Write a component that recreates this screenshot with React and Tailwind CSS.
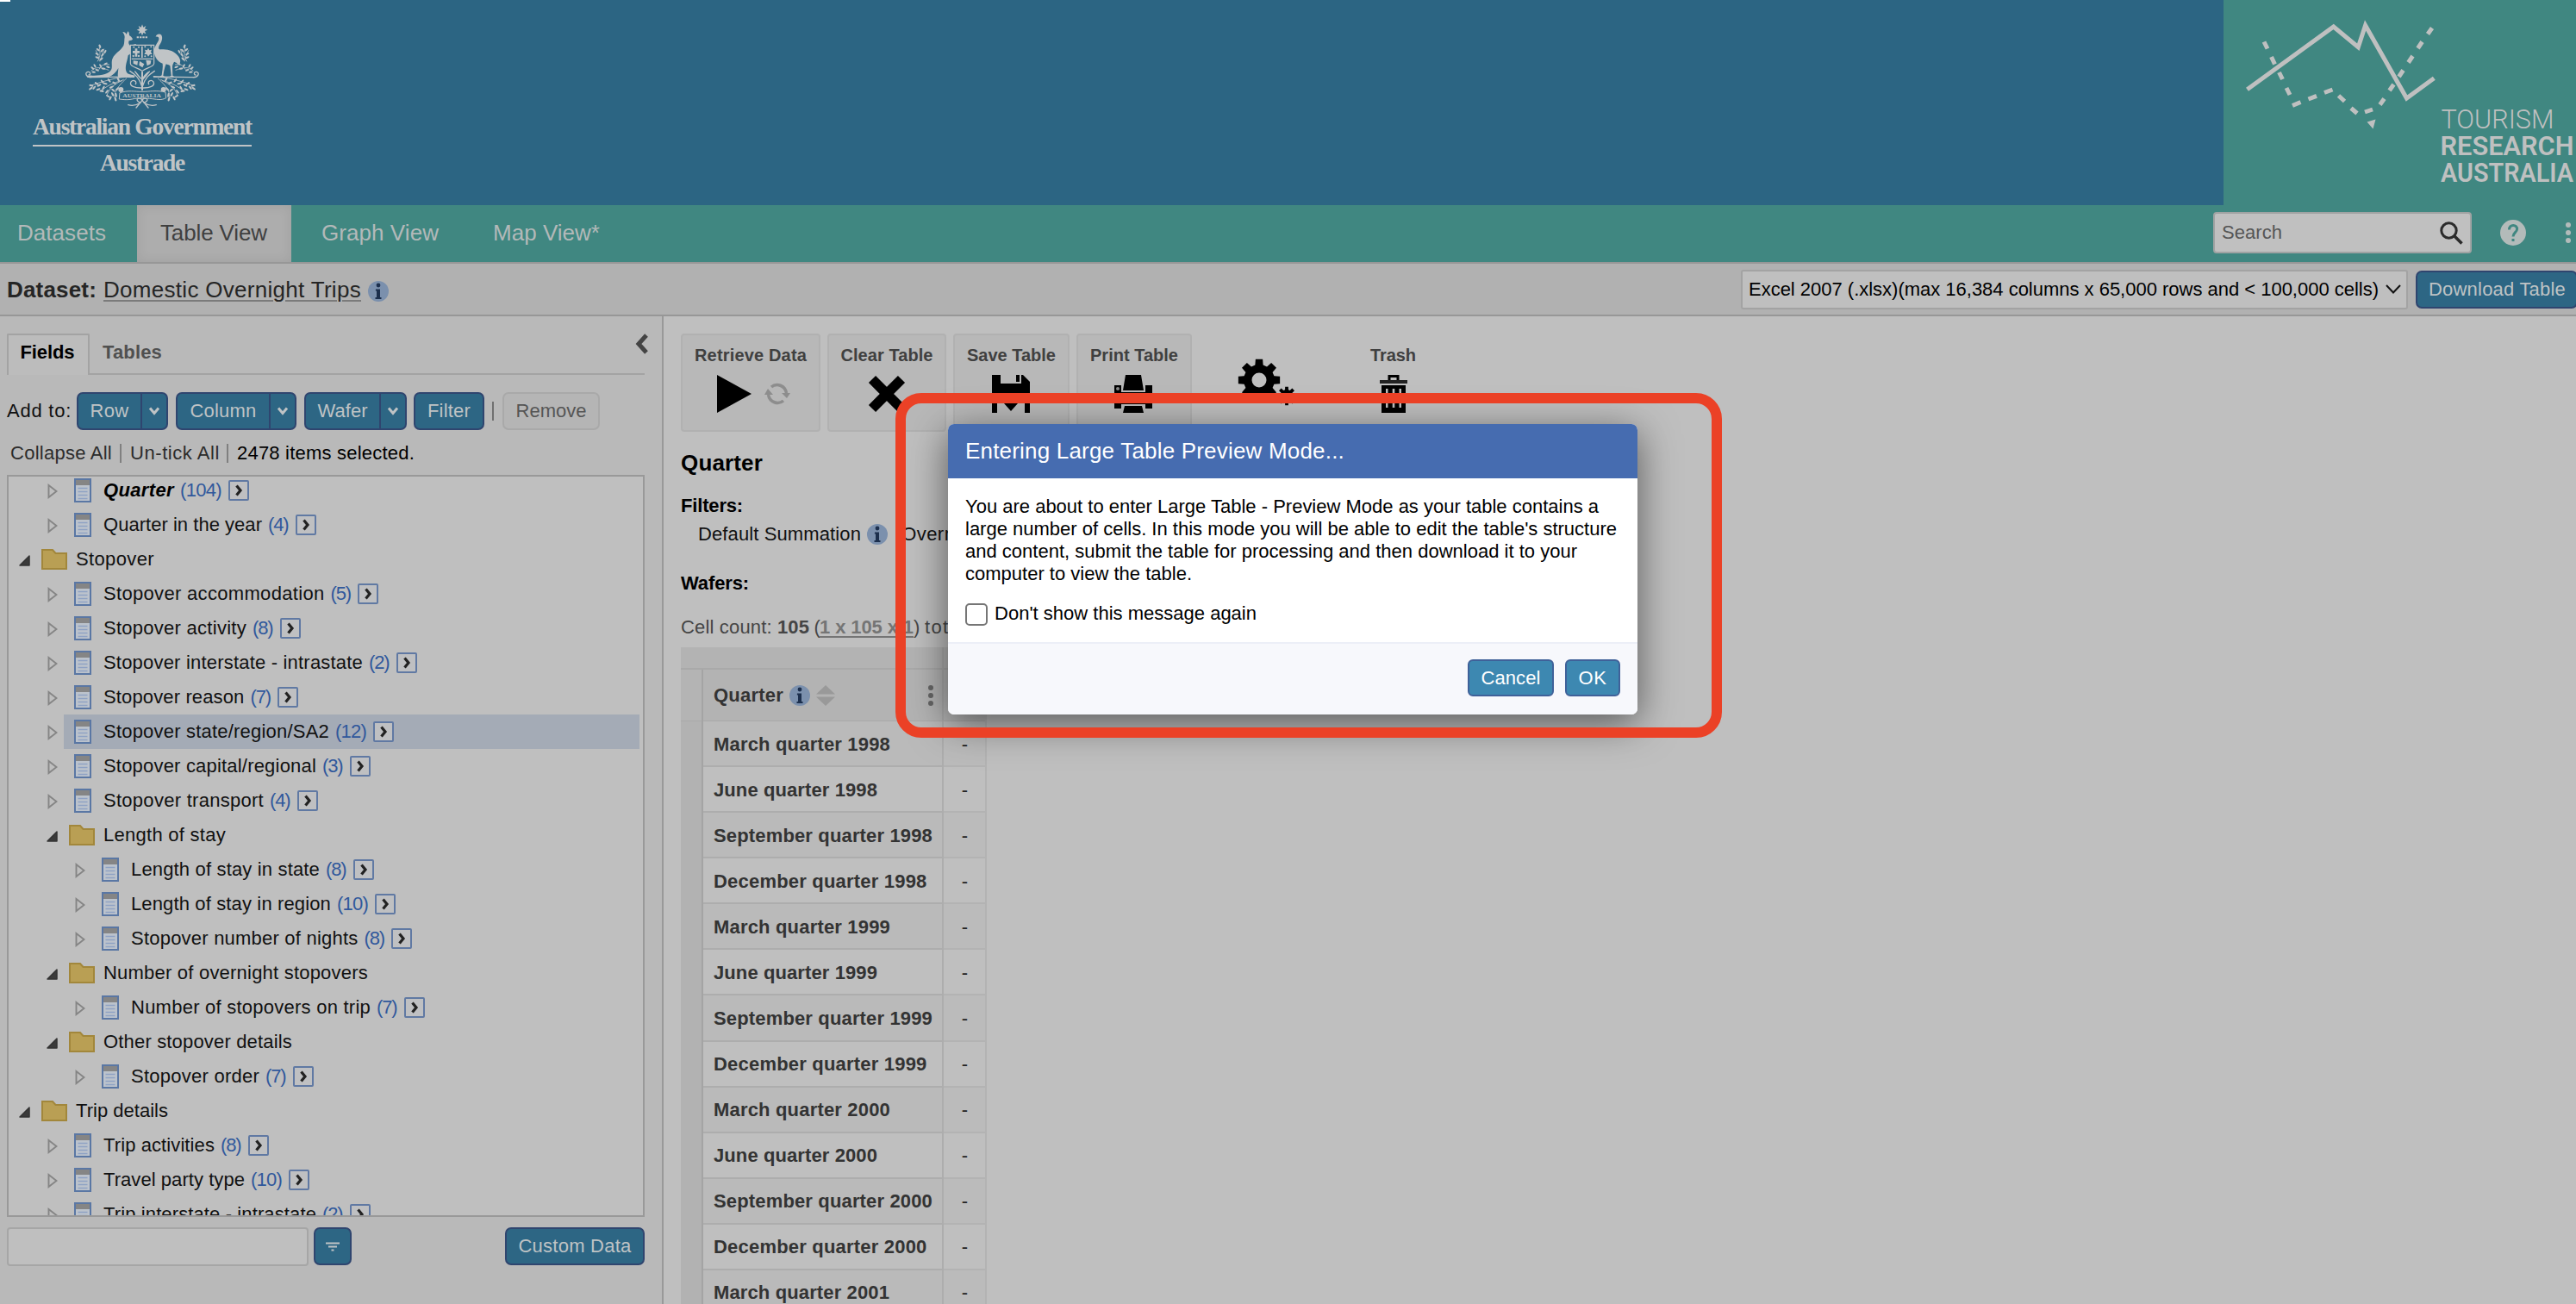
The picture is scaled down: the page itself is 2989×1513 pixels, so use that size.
import { useLayoutEffect, useRef } from "react";

/* Text set to an exact advance width by adjusting its letter spacing. */
function Fit({ w, className = "", children }) {
  const ref = useRef(null);
  useLayoutEffect(() => {
    const el = ref.current;
    el.style.letterSpacing = "0px";
    const natural = el.getBoundingClientRect().width;
    el.style.letterSpacing = `${(w - natural) / el.textContent.length}px`;
  }, [w, children]);
  return (
    <span ref={ref} className={`inline-block whitespace-pre ${className}`}>
      {children}
    </span>
  );
}

function gearPath(cx, cy, outer, inner, hole) {
  const pts = [];
  for (let i = 0; i < 8; i++) {
    const a = (i * Math.PI) / 4 - Math.PI / 2;
    [[-0.26, inner], [-0.17, outer], [0.17, outer], [0.26, inner]].forEach(([d, r]) => {
      pts.push(`${(cx + Math.cos(a + d) * r).toFixed(2)} ${(cy + Math.sin(a + d) * r).toFixed(2)}`);
    });
  }
  return `M${pts.join("L")}ZM${cx - hole} ${cy}a${hole} ${hole} 0 1 0 ${hole * 2} 0a${hole} ${hole} 0 1 0 ${-hole * 2} 0Z`;
}

const Sprig = () => (
  <g>
    <path d="M455 268C420 262 350 285 312 298M440 272C420 290 390 320 402 348M425 280C395 285 370 300 350 316M430 276C400 292 385 300 372 330" fill="none" strokeWidth="2.6" />
    <g stroke="none">
      {[
        [318, 297, 20], [316, 307, -35], [328, 304, -50], [336, 290, 40], [345, 296, -30], [342, 310, -20], [356, 283, 50],
        [360, 305, -60], [354, 316, 10], [372, 318, -50], [376, 334, 30], [384, 341, -60], [392, 327, 60], [402, 344, 70],
        [404, 330, 80], [366, 290, 10], [380, 279, 50], [388, 302, -20], [398, 288, 30], [412, 276, 60], [408, 309, -40], [394, 313, 40],
      ].map(([x, y, r]) => (
        <ellipse key={`${x}-${y}`} cx={x} cy={y} rx="8" ry="3.3" transform={`rotate(${r} ${x} ${y})`} />
      ))}
      <circle cx="421" cy="311" r="9" />
    </g>
    <path d="M345 156C348 180 352 192 340 212M362 170C356 190 352 200 348 212M334 175C342 190 344 200 346 210M318 245C335 228 355 235 378 243M345 240C352 225 365 220 380 224" fill="none" strokeWidth="2.4" />
    <g stroke="none">
      {[
        [348, 160, 70], [341, 172, 40], [355, 175, -50], [338, 187, 30], [357, 190, -50], [338, 199, 20], [353, 204, -40], [366, 179, -60],
        [322, 236, 40], [330, 228, 60], [338, 243, 20], [350, 228, 60], [360, 238, 10], [368, 221, -30], [376, 232, 20], [326, 250, 10],
      ].map(([x, y, r]) => (
        <ellipse key={`${x}-${y}`} cx={x} cy={y} rx="7" ry="3.2" transform={`rotate(${r} ${x} ${y})`} />
      ))}
    </g>
    <path d="M455 265C420 268 345 266 320 268C300 270 293 252 306 249C316 248 316 260 309 260" fill="none" strokeWidth="4" />
    <path d="M494 300C486 270 470 258 452 246M494 305C470 306 448 298 456 284C464 274 478 282 472 292M490 272C480 262 476 254 470 248" fill="none" strokeWidth="4" />
    <path d="M494 345C480 335 470 348 484 354C492 357 494 350 494 345M490 356C475 366 460 368 446 364M492 352L474 374" fill="none" strokeWidth="4" />
  </g>
);

function CoatOfArms() {
  return (
    <svg viewBox="291 80 408 300" className="h-[100px] w-[136px]" fill="#c0c4c6" stroke="#c0c4c6" strokeLinecap="round">
      <path d="M495 84l4 10 9-5-4 10 10 4-10 4 4 10-9-4-4 10-4-10-9 4 4-10-10-4 10-4-4-10 9 5z" stroke="none" />
      <path d="M476 129H516" strokeWidth="6" strokeDasharray="7 3" strokeLinecap="butt" />
      <Sprig />
      <g transform="translate(990 0) scale(-1 1)"><Sprig /></g>
      {/* kangaroo */}
      <path stroke="none" d="M427 110C434 110 438 114 440 119L445 108C450 112 450 118 450 122C456 126 460 130 462 135C460 140 454 140 449 141C446 148 448 153 453 158L472 152L476 157L456 164C452 172 452 180 454 186L446 192C444 206 440 216 438 228C436 244 440 256 452 258L470 262L468 269H412C408 262 412 246 412 236C404 250 392 264 376 267L306 269C298 266 306 261 320 262C350 263 380 258 388 240C392 230 386 214 392 202C400 184 420 176 430 158C434 148 432 138 434 128C434 120 430 116 427 110Z" />
      {/* emu */}
      <path stroke="none" d="M542 127C544 118 556 114 562 121C568 132 562 146 554 158C550 168 552 172 560 171C582 168 608 176 622 196C628 206 630 214 624 222L606 214C602 222 600 226 600 232L601 262L610 268H588L596 262L592 228C588 224 582 224 578 222C572 236 570 250 568 262L576 268H552L563 261C564 248 568 234 566 220C548 214 538 196 536 178C536 160 550 148 553 136C554 128 550 126 542 127Z" />
      {/* shield */}
      <path d="M454 156H536V220C536 232 510 234 495 246C480 234 454 232 454 220Z" fill="#2c6583" strokeWidth="3.5" />
      <g stroke="none">
        <path d="M470 168h8v8h8v8h-8v12h-8v-12h-8v-8h8zM516 166l4 8 8-2-3 8 5 8-8 0-6 8-5-8-9 0 5-8-3-8 8 2z" />
        <path d="M492 160h5v40h-5zM458 202h74v4h-74zM464 210l16 2-2 14-14-6zM486 212l16 10-6 12-12-8zM508 208l18 2-2 12-12 6z" />
        <circle cx="466" cy="163" r="3" /><circle cx="483" cy="163" r="3" /><circle cx="505" cy="162" r="3" /><circle cx="526" cy="162" r="3" />
        <circle cx="483" cy="194" r="3.4" /><circle cx="464" cy="194" r="3.4" /><circle cx="505" cy="195" r="3" /><circle cx="527" cy="195" r="3" />
      </g>
      <path d="M495 250V312M495 282C495 270 505 262 515 252" fill="none" strokeWidth="6" />
      {/* ribbon */}
      <path d="M418 322C445 312 470 318 495 318C520 318 545 312 576 320L578 340C560 350 545 344 520 342C505 340 485 340 470 342C445 348 430 346 416 344Z" fill="#2c6583" strokeWidth="3" />
      <text x="427" y="338" fontSize="21" fontWeight="bold" fontFamily="Liberation Serif, serif" textLength="134" lengthAdjust="spacingAndGlyphs" stroke="none">AUSTRALIA</text>
    </svg>
  );
}

function ResearchLogo() {
  return (
    <svg viewBox="2580 0 409 238" className="h-[238px] w-[409px] shrink-0 bg-[#408781]" fill="#bfc0c0">
      <path d="M2607.5 103.7L2707.7 31L2736.3 54.7L2744.6 29.5L2792.5 114L2824.3 90.7" fill="none" stroke="#bfc0c0" strokeWidth="5" />
      <g fill="none" stroke="#bfc0c0" strokeWidth="5">
        <path d="M2627 48.5L2631 56.5M2635.5 66L2639.5 74.5M2644.5 84L2648.5 92M2653 102L2657 110M2660 122.5L2669.5 118.5M2678.5 115L2688 111.3M2697 107.5L2706.5 104M2713.5 111L2720.5 117.5M2728 125.5L2735 131.5M2744 130L2753 127M2761.5 121.5L2766.5 114.5M2772.5 105L2777.5 98M2783.5 89L2788.5 81.5M2794.5 72.5L2799.5 65M2805.5 56L2810.5 48.5M2817 39.5L2822 32.5" />
      </g>
      <path d="M2746.5 141.5L2756.5 138.5L2753.5 149.5Z" />
      <text x="2832.5" y="148.5" fontSize="31.5" fontWeight="300" fontFamily="Roboto, sans-serif" textLength="131" lengthAdjust="spacingAndGlyphs">TOURISM</text>
      <text x="2831.5" y="179.5" fontSize="31" fontWeight="600" fontFamily="Roboto, sans-serif" textLength="155" lengthAdjust="spacingAndGlyphs">RESEARCH</text>
      <text x="2832" y="210.5" fontSize="31" fontWeight="600" fontFamily="Roboto, sans-serif" textLength="154" lengthAdjust="spacingAndGlyphs">AUSTRALIA</text>
    </svg>
  );
}

const Info = ({ className = "" }) => (
  <svg viewBox="0 0 24 24" className={`size-6 shrink-0 ${className}`}>
    <circle cx="12" cy="12" r="12" fill="#7b90ad" />
    <path d="M9 9.5H14V19H15.5V21H8.5V19H10V11.5H8.8Z" fill="#1c2f4d" />
    <circle cx="12" cy="5" r="2.4" fill="#1c2f4d" />
  </svg>
);

const DocIcon = () => (
  <svg viewBox="0 0 20 28" className="h-7 w-5">
    <rect x="1" y="1" width="18" height="26" fill="#bcc3cc" stroke="#5a77a4" strokeWidth="2" />
    <rect x="2" y="2" width="16" height="6" fill="#858585" />
    <path d="M4.5 11.5H15.5M4.5 15.5H15.5M4.5 19.5H15.5M4.5 23.5H15.5" stroke="#8ea2c4" strokeWidth="1.6" />
  </svg>
);

const FolderIcon = () => (
  <svg viewBox="0 0 30 24" className="h-6 w-[30px]">
    <path d="M1 1H13L16.5 5H29V23H1Z" fill="#b99f54" stroke="#a2873b" strokeWidth="2" />
  </svg>
);

const ClosedArrow = () => (
  <svg viewBox="0 0 12 18" className="ml-px h-[18px] w-3">
    <path d="M1.5 2L10.5 9L1.5 16Z" fill="none" stroke="#858585" strokeWidth="1.9" />
  </svg>
);
const OpenArrow = () => (
  <svg viewBox="0 0 13 13" className="h-[13px] w-[13px]">
    <path d="M12 1V12H1Z" fill="#3a3a3a" stroke="#333" strokeWidth="1.5" strokeLinejoin="round" />
  </svg>
);

const rows = [
  { l: 1, t: "Quarter", w: 82, n: "(104)", nw: 48, bold: true },
  { l: 1, t: "Quarter in the year", w: 184, n: "(4)", nw: 23.5 },
  { l: 0, t: "Stopover", w: 91 },
  { l: 1, t: "Stopover accommodation", w: 256.5, n: "(5)", nw: 23.5 },
  { l: 1, t: "Stopover activity", w: 166, n: "(8)", nw: 23.5 },
  { l: 1, t: "Stopover interstate - intrastate", w: 301, n: "(2)", nw: 23.5 },
  { l: 1, t: "Stopover reason", w: 163.5, n: "(7)", nw: 23.5 },
  { l: 1, t: "Stopover state/region/SA2", w: 262, n: "(12)", nw: 36, sel: true },
  { l: 1, t: "Stopover capital/regional", w: 247, n: "(3)", nw: 23.5 },
  { l: 1, t: "Stopover transport", w: 186, n: "(4)", nw: 23.5 },
  { l: 1, t: "Length of stay", w: 142, open: true },
  { l: 2, t: "Length of stay in state", w: 219, n: "(8)", nw: 23.5 },
  { l: 2, t: "Length of stay in region", w: 232, n: "(10)", nw: 36 },
  { l: 2, t: "Stopover number of nights", w: 263.5, n: "(8)", nw: 23.5 },
  { l: 1, t: "Number of overnight stopovers", w: 307, open: true },
  { l: 2, t: "Number of stopovers on trip", w: 278, n: "(7)", nw: 23.5 },
  { l: 1, t: "Other stopover details", w: 219, open: true },
  { l: 2, t: "Stopover order", w: 149, n: "(7)", nw: 23.5 },
  { l: 0, t: "Trip details", w: 107 },
  { l: 1, t: "Trip activities", w: 129, n: "(8)", nw: 23.5 },
  { l: 1, t: "Travel party type", w: 164, n: "(10)", nw: 36 },
  { l: 1, t: "Trip interstate - intrastate", w: 247, n: "(2)", nw: 23.5 },
];
const indent = ["pl-0", "pl-8", "pl-16"];

function TreeRow({ r }) {
  return (
    <div className={`flex h-10 shrink-0 items-stretch ${indent[r.l]}`}>
      <div className="flex w-8 shrink-0 items-center pt-0.5 pl-3">{r.n ? <ClosedArrow /> : <OpenArrow />}</div>
      <div className={`mr-1 flex grow items-center ${r.sel ? "bg-[#a4abb6]" : ""}`}>
        <div className={`flex w-[46px] shrink-0 items-center ${r.n ? "pl-3" : "pl-1.5"}`}>{r.n ? <DocIcon /> : <FolderIcon />}</div>
        <Fit w={r.w} className={`-mt-px text-[#111] ${r.bold ? "font-bold text-black italic" : ""}`}>{r.t}</Fit>
        {r.n && (
          <>
            <Fit w={r.nw} className="-mt-px ml-[7px] text-[#30589c]">{r.n}</Fit>
            <span className="ml-2 flex h-6 w-6 items-center justify-center rounded-[2px] border-2 border-[#6079a3] bg-[#bfc0c2]">
              <svg viewBox="0 0 10 14" className="h-3.5 w-2.5"><path d="M2.5 1.5L7 7L2.5 12.5" fill="none" stroke="#222" strokeWidth="3.2" /></svg>
            </span>
          </>
        )}
      </div>
    </div>
  );
}

const btn = "flex h-11 items-center justify-center rounded-[7px] border-2 border-[#2f456f] bg-[#2d6684] text-[#bfc3c5]";

function SplitButton({ tw, className, children }) {
  return (
    <div className={`${btn} ${className}`}>
      <span className="flex grow justify-center"><Fit w={tw}>{children}</Fit></span>
      <span className="flex h-full w-[30px] items-center justify-center border-l-2 border-[#2f456f]">
        <svg viewBox="0 0 14 10" className="h-2.5 w-3.5"><path d="M2 1.5L7 7.5L12 1.5" fill="none" stroke="#bfc3c5" strokeWidth="3" /></svg>
      </span>
    </div>
  );
}

function Sidebar() {
  return (
    <aside className="flex w-[770px] shrink-0 flex-col border-r-2 border-[#999] bg-[#b9b9b9] pt-5 pl-2">
      <div className="flex h-12 w-[740px]">
        <div className="flex w-24 justify-center rounded-t-[2px] border-2 border-b-0 border-[#a3a3a3] bg-[#bcbcbc] pt-[5px] pr-0.5 font-bold text-black"><Fit w={63}>Fields</Fit></div>
        <div className="flex grow justify-between border-b-2 border-[#a3a3a3] pl-[15px]">
          <span className="pt-[7px] font-bold text-[#505050]"><Fit w={69}>Tables</Fit></span>
          <svg viewBox="0 0 16 26" className="-mr-1 h-[26px] w-4"><path d="M14 2L5 12L14 22" fill="none" stroke="#444" strokeWidth="5" /></svg>
        </div>
      </div>
      <div className="mt-5 flex items-center">
        <Fit w={75} className="mr-1.5 text-[#111]">Add to:</Fit>
        <SplitButton tw={45} className="w-[106px]">Row</SplitButton>
        <SplitButton tw={77} className="ml-[9px] w-[140px]">Column</SplitButton>
        <SplitButton tw={58} className="ml-[9px] w-[119px]">Wafer</SplitButton>
        <div className={`${btn} ml-2 w-[82px]`}><Fit w={50}>Filter</Fit></div>
        <div className="ml-[9px] h-[22px] w-0.5 bg-[#707070]" />
        <div className="ml-2.5 flex h-11 w-[113px] items-center justify-center rounded-[7px] border-2 border-[#a9a9a9] bg-[#b5b5b5] text-[#555]"><Fit w={82}>Remove</Fit></div>
      </div>
      <div className="mt-3 flex h-[30px] items-center pl-1 text-[#2c2c2c]">
        <Fit w={118}>Collapse All</Fit>
        <div className="mr-[10px] ml-[9px] h-[22px] w-0.5 bg-[#808080]" />
        <Fit w={104}>Un-tick All</Fit>
        <div className="mr-[10px] ml-[8px] h-[22px] w-0.5 bg-[#808080]" />
        <Fit w={206} className="text-black">2478 items selected.</Fit>
      </div>
      <div className="mt-[10px] flex h-[861px] w-[740px] flex-col overflow-hidden border-2 border-[#999] bg-[#bfbfbf]">
        <div className="-mt-1 flex flex-col">{rows.map((r) => <TreeRow key={r.t} r={r} />)}</div>
      </div>
      <div className="mt-3 flex w-[740px]">
        <div className="h-[45px] w-[350px] rounded-[4px] border-2 border-[#a6a6a6] bg-[#bfbfbf]" />
        <div className={`${btn} ml-1.5 w-11`}>
          <svg viewBox="0 0 16 11" className="h-[11px] w-4"><path d="M0 1.5H16M3 5.5H13M6.5 9.5H9.5" stroke="#bfc3c5" strokeWidth="2" /></svg>
        </div>
        <div className={`${btn} ml-auto w-[162px]`}><Fit w={131}>Custom Data</Fit></div>
      </div>
    </aside>
  );
}

const tool = "flex h-[114px] flex-col items-center rounded-[4px] border-2 border-[#b1b1b1] bg-[#b8b8b8] pt-2";
const toolLabel = "text-[20px] leading-[30px] font-bold text-[#404040]";

function Toolbar() {
  return (
    <div className="flex gap-2 leading-[30px]">
      <div className={`${tool} w-[162px]`}>
        <Fit w={130} className={toolLabel}>Retrieve Data</Fit>
        <div className="mt-2 ml-[7px] flex items-center gap-[15px]">
          <svg viewBox="0 0 40 44" className="h-11 w-10"><path d="M0 0L40 22L0 44Z" /></svg>
          <svg viewBox="0 0 30 26" className="h-[26px] w-[30px]" fill="#8d8d8d" stroke="#8d8d8d">
            <path d="M8 5C14 0 24 3 25.5 12M22 21C16 26 6 23 4.500 14" fill="none" strokeWidth="3.5" />
            <path d="M20 12H30L26 18ZM0 14H10L4 7Z" stroke="none" />
          </svg>
        </div>
      </div>
      <div className={`${tool} w-[138px]`}>
        <Fit w={107} className={toolLabel}>Clear Table</Fit>
        <svg viewBox="0 0 44 44" className="mt-2 -ml-px size-11"><path d="M5 5L39 39M39 5L5 39" stroke="#000" strokeWidth="11.5" /></svg>
      </div>
      <div className={`${tool} w-[135px]`}>
        <Fit w={103} className={toolLabel}>Save Table</Fit>
        <svg viewBox="0 0 44 44" className="mt-2 -ml-px size-11">
          <path fillRule="evenodd" d="M0 0H10V10H34V0H36L44 8V44H38V24H30V33L22 42L14 33H17V24H6V44H0ZM28 0H32V8H28Z" />
        </svg>
      </div>
      <div className={`${tool} w-[134px]`}>
        <Fit w={102} className={toolLabel}>Print Table</Fit>
        <svg viewBox="0 0 44 44" className="mt-2 -ml-0.5 size-11">
          <path d="M13 0H31L34 18H10ZM0 12H8V20H36V12H44V39H36V34H8V39H0ZM12 36H32L34 44H10Z" />
          <circle cx="4" cy="16" r="2" fill="#888" />
        </svg>
      </div>
      <svg viewBox="1430 410 80 70" className="mt-[23px] ml-10 h-[70px] w-20" fillRule="evenodd">
        <path d={gearPath(1460, 441, 24.5, 18, 8.5)} />
        <path d={gearPath(1492, 459.5, 11, 7.5, 3)} />
      </svg>
      <div className="ml-[71px] flex flex-col items-center pt-[10px]">
        <Fit w={53} className={toolLabel}>Trash</Fit>
        <svg viewBox="0 0 32 44" className="mt-2 h-11 w-8">
          <path d="M11 7V1.5H21V7" fill="none" stroke="#000" strokeWidth="3" />
          <path d="M0 6H32V10H0Z" fill="#222" />
          <path fillRule="evenodd" d="M2 12H30V44H2ZM7 16H9.5V38H7ZM14.7 16H17.3V38H14.7ZM22.5 16H25V38H22.5Z" />
        </svg>
      </div>
    </div>
  );
}

const quarters = [
  ["March quarter 1998", 205], ["June quarter 1998", 190], ["September quarter 1998", 254], ["December quarter 1998", 247.5],
  ["March quarter 1999", 205], ["June quarter 1999", 190], ["September quarter 1999", 254], ["December quarter 1999", 247.5],
  ["March quarter 2000", 205], ["June quarter 2000", 190], ["September quarter 2000", 254], ["December quarter 2000", 247.5],
  ["March quarter 2001", 204],
];

function DataTable() {
  return (
    <div className="mt-2 w-[355px] text-[#333]">
      <div className="flex h-[26px] border-b-2 border-[#a9a9a9] bg-[#b3b3b3]">
        <div className="w-[305px] border-r-2 border-[#aaa]" />
      </div>
      <div className="flex">
        <div className="w-[26px] shrink-0 border-r-2 border-[#a4a4a4] bg-[#b2b2b2]">
          <div className="h-[60px] border-b border-[#a9a9a9] bg-[#b4b4b4]" />
        </div>
        <div className="w-[279px] shrink-0">
          <div className="flex h-[60px] items-center border-r-2 border-b border-[#a9a9a9] bg-[#b3b3b3] pr-2.5 pl-3 font-bold">
            <Fit w={81}>Quarter</Fit>
            <Info className="ml-[7px]" />
            <svg viewBox="0 0 22 24" className="ml-[7px] h-6 w-[22px]" fill="#999"><path d="M11 0L22 10.5H0ZM0 13.5H22L11 24Z" /></svg>
            <svg viewBox="0 0 6 26" className="ml-auto h-[26px] w-1.5" fill="#666"><circle cx="3" cy="4" r="3" /><circle cx="3" cy="13" r="3" /><circle cx="3" cy="22" r="3" /></svg>
          </div>
          {quarters.map(([t, w], i) => (
            <div key={t} className={`flex h-[53.08px] items-center border-r-2 border-b-2 border-[#adadad] pt-0.5 pl-3 font-bold ${i % 2 ? "bg-[#bfbfbf]" : "bg-[#bababa]"}`}>
              <Fit w={w}>{t}</Fit>
            </div>
          ))}
        </div>
        <div className="w-[50px] border-r-2 border-[#b3b3b3]">
          <div className="h-[60px] border-b border-[#a9a9a9] bg-[#b3b3b3]" />
          {quarters.map(([t], i) => (
            <div key={t} className={`flex h-[53.08px] items-center justify-center border-b-2 border-[#b3b3b3] pt-0.5 pl-px text-[#222] ${i % 2 ? "bg-[#bfbfbf]" : "bg-[#bbbbbb]"}`}>-</div>
          ))}
        </div>
      </div>
    </div>
  );
}

function Dialog() {
  const action = "flex h-[43px] items-center justify-center rounded-[6px] border-2 border-[#3f6199] bg-[#3d88b1] text-white";
  return (
    <>
      <div className="absolute top-[492px] left-[1100px] flex h-[337px] w-[800px] flex-col overflow-clip rounded-[7px] bg-white text-black shadow-[0_10px_46px_rgba(0,0,0,0.55)]">
        <div className="flex h-[63px] shrink-0 items-center bg-[#466cb0] pb-0.5 pl-5 text-[26px] text-white"><Fit w={440}>Entering Large Table Preview Mode...</Fit></div>
        <div className="flex grow flex-col pt-5 pl-5">
          <div className="flex flex-col leading-[26px]">
            <span><Fit w={735}>You are about to enter Large Table - Preview Mode as your table contains a</Fit></span>
            <span><Fit w={756}>large number of cells. In this mode you will be able to edit the table's structure</Fit></span>
            <span><Fit w={710}>and content, submit the table for processing and then download it to your</Fit></span>
            <span><Fit w={263}>computer to view the table.</Fit></span>
          </div>
          <div className="mt-5 flex items-center">
            <span className="size-[26px] rounded-[5px] border-2 border-[#767676] bg-white" />
            <Fit w={304} className="-mt-0.5 ml-2">Don't show this message again</Fit>
          </div>
        </div>
        <div className="flex h-[84px] shrink-0 items-start justify-end gap-[13px] border-t-2 border-[#eceff7] bg-[#f7f8fc] pt-[18px] pr-5">
          <div className={`${action} w-[100px]`}><Fit w={69}>Cancel</Fit></div>
          <div className={`${action} w-16`}><Fit w={33}>OK</Fit></div>
        </div>
      </div>
      <div className="absolute top-[456px] left-[1039px] h-[400px] w-[959px] rounded-[30px] border-[12px] border-[#eb4126]" />
    </>
  );
}

export default function App() {
  return (
    <div className="relative flex h-[1513px] w-[2989px] flex-col overflow-hidden bg-[#bfbfbf] font-['Liberation_Sans',Arial,sans-serif] text-[22px] leading-[30px]">
      <header className="relative flex h-[238px] shrink-0 justify-between bg-[#2c6583]">
        <div className="absolute top-0 left-0 h-0.5 w-3 bg-white" />
        <div className="ml-[38px] flex w-[254px] flex-col items-center pt-[27px] font-['Liberation_Serif',serif] text-[27.5px] font-bold text-[#c0c4c6]">
          <CoatOfArms />
          <Fit w={254} className="mt-[5px]">Australian Government</Fit>
          <div className="mt-[6px] h-0.5 w-full bg-[#c0c4c6]" />
          <Fit w={98} className="mt-[4px]">Austrade</Fit>
        </div>
        <ResearchLogo />
      </header>
      <nav className="flex h-[68px] shrink-0 items-stretch border-b-2 border-[#979797] bg-[#408781] text-[26px] text-[#b3b9b9]">
        <span className="flex w-[159px] items-center pb-0.5 pl-5"><Fit w={103}>Datasets</Fit></span>
        <span className="flex w-[179px] items-center bg-[#adadad] pb-0.5 pl-[27px] text-[#404040] shadow-[inset_0_0_14px_rgba(0,0,0,0.08)]"><Fit w={124}>Table View</Fit></span>
        <span className="flex items-center pb-0.5 pl-[35px]"><Fit w={136}>Graph View</Fit></span>
        <span className="flex items-center pb-0.5 pl-[63px]"><Fit w={124}>Map View*</Fit></span>
        <div className="mt-2 ml-auto flex h-12 w-[300px] items-center justify-between rounded-[4px] border-2 border-[#a0a3a3] bg-[#c0c0c0] pr-2 pl-2 text-[22px] text-[#555]">
          <Fit w={70}>Search</Fit>
          <svg viewBox="0 0 27 27" className="size-[27px]" fill="none" stroke="#2b2b2b"><circle cx="10.5" cy="10.5" r="8.7" strokeWidth="3" /><path d="M17 17L25.5 25.5" strokeWidth="3.5" /></svg>
        </div>
        <svg viewBox="0 0 30 30" className="mt-[17px] ml-[33px] size-[30px] shrink-0">
          <circle cx="15" cy="15" r="15" fill="#b3bbba" />
          <path d="M10.5 11.5C10.5 4.5 20 5 19.6 11C19.3 14.5 15 15 15 19.5" fill="none" stroke="#408781" strokeWidth="3" />
          <rect x="13.5" y="22" width="3" height="3" fill="#408781" />
        </svg>
        <svg viewBox="0 0 6 26" className="mt-[19px] mr-1.5 ml-[46px] h-[26px] w-1.5 shrink-0" fill="#b3bbba"><circle cx="3" cy="4" r="3" /><circle cx="3" cy="13" r="3" /><circle cx="3" cy="22" r="3" /></svg>
      </nav>
      <div className="flex h-[61px] shrink-0 items-center border-b-2 border-[#979797] bg-[#b1b1b1] pl-2">
        <Fit w={104} className="text-[26px] font-bold text-[#252525]">Dataset:</Fit>
        <Fit w={299} className="ml-2 text-[26px] text-[#252525] underline decoration-[#7b7b7b] decoration-2 underline-offset-[3px]">Domestic Overnight Trips</Fit>
        <Info className="mt-[5px] ml-2" />
        <div className="ml-auto flex h-[46px] w-[774px] shrink-0 items-center rounded-[3px] border-2 border-[#a3a3a3] bg-[#bfbfbf] pl-[7px] text-black">
          <Fit w={731}>{"Excel 2007 (.xlsx)(max 16,384 columns x 65,000 rows and < 100,000 cells)"}</Fit>
          <svg viewBox="0 0 18 11" className="ml-2 h-[11px] w-[18px]"><path d="M1 1L9 9.5L17 1" fill="none" stroke="#111" strokeWidth="2" /></svg>
        </div>
        <div className={`${btn} -mr-0.5 ml-[9px] w-[188px] shrink-0 pl-px`}><Fit w={159}>Download Table</Fit></div>
      </div>
      <div className="flex grow">
        <Sidebar />
        <main className="flex min-w-0 grow flex-col items-start pt-5 pl-5">
          <Toolbar />
          <Fit w={95} className="mt-[21px] text-[26px] font-bold text-black">Quarter</Fit>
          <Fit w={72} className="mt-5 font-bold text-black">Filters:</Fit>
          <div className="mt-[3px] flex items-center pl-5 text-[#111]">
            <Fit w={189}>Default Summation</Fit>
            <Info className="ml-[7px]" />
            <span className="ml-2">:</span>
            <Fit w={150} className="ml-0.5">Overnight trips</Fit>
          </div>
          <Fit w={79} className="mt-[27px] font-bold text-black">Wafers:</Fit>
          <div className="mt-[21px] flex text-[#454545]">
            <Fit w={112}>Cell count: </Fit>
            <Fit w={37} className="font-bold">105</Fit>
            <Fit w={12}> (</Fit>
            <Fit w={109} className="font-bold text-[#757575] underline decoration-2 underline-offset-[3px]">1 x 105 x 1</Fit>
            <Fit w={13}>) </Fit>
            <Fit w={106}>total cells</Fit>
          </div>
          <DataTable />
        </main>
      </div>
      <Dialog />
    </div>
  );
}
